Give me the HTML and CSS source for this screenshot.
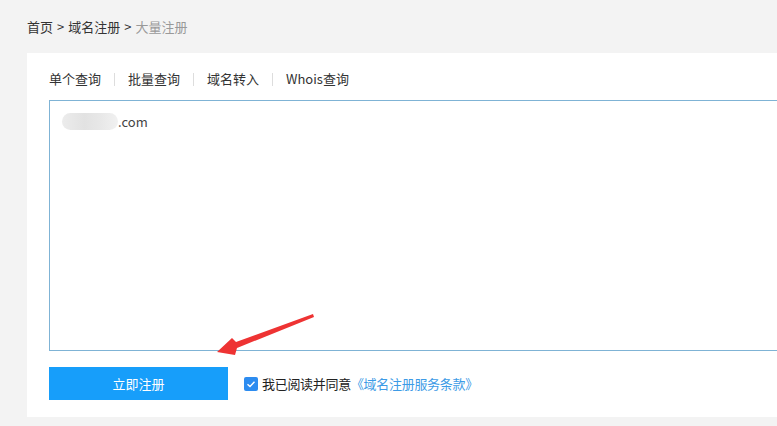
FILE: index.html
```html
<!DOCTYPE html>
<html>
<head>
<meta charset="utf-8">
<link rel="stylesheet" href="styles.css">
</head>
<body>
<div class="crumbs"><span>首页</span><span class="gt">&gt;</span><span>域名注册</span><span class="gt">&gt;</span><span class="cur">大量注册</span></div>
<div class="card">
  <div class="tabs">
    <span class="tab">单个查询</span><i class="sep"></i>
    <span class="tab">批量查询</span><i class="sep"></i>
    <span class="tab">域名转入</span><i class="sep"></i>
    <span class="tab">Whois查询</span>
  </div>
  <div class="box"><span class="blur"></span>.com</div>
  <div class="actions">
    <button class="btn">立即注册</button>
    <label class="agree"><span class="chk"><svg width="14" height="14" viewBox="0 0 14 14"><path d="M3.5 7.2 L6 9.5 L10.5 4.8" fill="none" stroke="#fff" stroke-width="1.4"/></svg></span>我已阅读并同意<a class="link">《域名注册服务条款》</a></label>
  </div>
</div>
<svg class="arrow" width="120" height="60" viewBox="0 0 120 60"><polygon points="113,9 36,37 32,33 17,47 35,50 37,43 114,12" fill="#ee3333"/></svg>
</body>
</html>
```
FILE: styles.css
```css
html,body{margin:0;padding:0;}
body{background:#f3f3f3;font-family:"Noto Sans CJK SC","Microsoft YaHei",sans-serif;font-size:13px;color:#333;width:777px;height:426px;overflow:hidden;position:relative;}
.crumbs{padding:17px 0 0 27px;height:53px;line-height:20px;box-sizing:border-box;white-space:nowrap;}
.crumbs .gt{margin:0 4px;}
.crumbs .cur{color:#999;}
.card{margin-left:27px;background:#fff;width:760px;padding:16px 0 17px 22px;box-sizing:border-box;}
.tabs{display:flex;align-items:center;height:20px;line-height:20px;}
.sep{display:inline-block;width:1px;height:13px;background:#ddd;margin:0 13px;}
.box{margin-top:11px;height:251px;border:1px solid #7fb3d5;border-right:none;box-sizing:border-box;padding:11px 12px;line-height:20px;color:#444;}
.blur{display:inline-block;width:56px;height:17px;vertical-align:-3px;border-radius:9px;background:linear-gradient(90deg,#ececec,#e2e2e2 40%,#e8e8e8 70%,#f1f1f1);}
.actions{display:flex;align-items:center;margin-top:16px;}
.btn{width:179px;height:33px;border:none;background:#179efa;color:#fff;font-family:inherit;font-size:13px;padding:0;}
.agree{display:flex;align-items:center;margin-left:16px;color:#222;letter-spacing:-0.3px;}
.chk{width:14px;height:14px;background:#2d8cf0;border-radius:2px;margin-right:4px;display:inline-block;}
.chk svg{display:block;}
.link{color:#3d9be6;}
.arrow{position:absolute;left:200px;top:305px;}
```
